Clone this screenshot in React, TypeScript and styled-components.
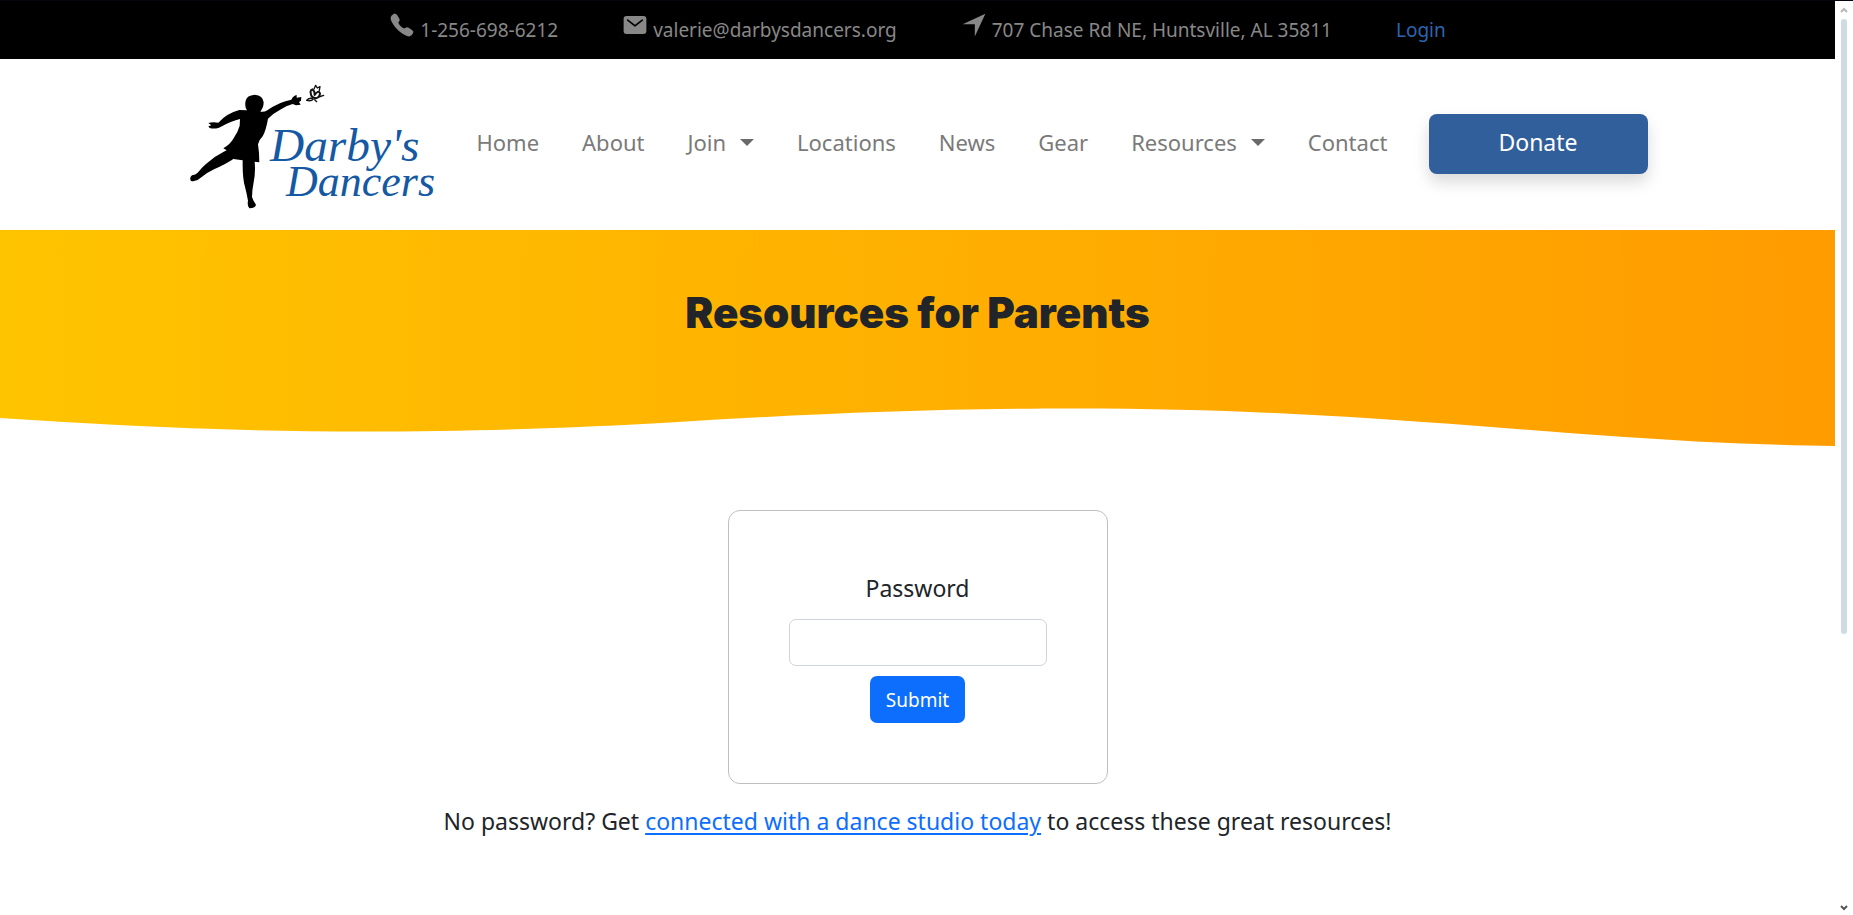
import React from 'react';
import styled, { createGlobalStyle } from 'styled-components';
import { IoCall, IoMail, IoNavigateSharp } from 'react-icons/io5';

const GlobalStyle = createGlobalStyle`
  *, *::before, *::after { box-sizing: border-box; }
  body {
    margin: 0;
    background: #fff;
    color: #212529;
    font-family: "Noto Sans", "Open Sans", sans-serif;
    font-size: 23px;
    line-height: 34px;
  }
`;

const Shell = styled.div`
  display: flex;
  min-height: 100vh;
  border-top: 1px solid #03060f;
`;

const Page = styled.div`
  flex: 1;
  min-width: 0;
`;

const TopBar = styled.address`
  display: flex;
  flex-wrap: wrap;
  justify-content: center;
  column-gap: 64px;
  min-height: 58px;
  padding-bottom: 4px;
  background: #000;
  color: #888;
  font-size: 19px;
  font-style: normal;
`;

const ContactItem = styled.span`
  display: inline-flex;
  align-items: center;
  gap: 5px;
  padding-top: 4px;

  svg {
    width: 26px;
    height: 26px;
    margin-bottom: 10px;
  }
`;

const LoginLink = styled.a`
  display: inline-flex;
  align-items: center;
  padding-top: 4px;
  color: #2b66b1;
  text-decoration: none;
`;

const Header = styled.header`
  display: flex;
  align-items: center;
  max-width: 1460px;
  margin: 0 auto;
  padding: 22px 0 19px;
`;

const LogoLink = styled.a`
  display: block;
  flex: none;

  svg {
    display: block;
    width: 248px;
    height: 130px;
  }
`;

const NavLinks = styled.nav`
  display: flex;
  flex: 1;
  justify-content: space-between;
  padding: 0 41px 8px;
`;

const navText = `
  color: #7a7a7a;
  font-family: inherit;
  font-size: 22px;
  font-weight: 400;
  line-height: 34px;
`;

const NavLink = styled.a`
  ${navText}
  text-decoration: none;
`;

const NavMenuButton = styled.button`
  ${navText}
  display: inline-flex;
  align-items: center;
  gap: 14px;
  padding: 0;
  border: 0;
  background: none;

  &::after {
    content: "";
    border: 7px solid transparent;
    border-top-color: #6a6a6a;
    border-bottom: 0;
  }
`;

const DonateButton = styled.button`
  flex: none;
  width: 219px;
  height: 60px;
  margin-bottom: 4px;
  padding: 0 0 4px;
  border: 0;
  border-radius: 8px;
  background: #315f9b;
  box-shadow: 0 8px 16px rgba(0, 0, 0, 0.15);
  color: #fff;
  font-family: inherit;
  font-size: 23px;
`;

const Hero = styled.section`
  background: linear-gradient(to right, #ffc400, #ff9c00);
`;

const HeroTitle = styled.h1`
  margin: 0;
  padding: 59px 0 69px;
  font-family: Inter, "Liberation Sans", sans-serif;
  font-size: 42px;
  font-weight: 900;
  line-height: 48px;
  text-align: center;
`;

const Wave = styled.svg`
  display: block;
  width: 100%;
  height: 40px;
`;

const Content = styled.main`
  display: flex;
  flex-direction: column;
  align-items: center;
  gap: 20px;
  padding: 64px 16px;
`;

const LoginCard = styled.form`
  display: flex;
  flex-direction: column;
  align-items: center;
  width: 380px;
  padding: 60px;
  border: 1px solid #bfbfbf;
  border-radius: 12px;
`;

const FieldLabel = styled.label`
  margin-bottom: 14px;
`;

const PasswordInput = styled.input`
  width: 100%;
  height: 47px;
  margin-bottom: 10px;
  padding: 6px 12px;
  border: 1px solid #ced4da;
  border-radius: 7px;
  background: #fff;
  font: inherit;
`;

const SubmitButton = styled.button`
  width: 95px;
  height: 47px;
  padding: 0;
  border: 0;
  border-radius: 7px;
  background: #0d6efd;
  color: #fff;
  font-family: inherit;
  font-size: 19px;
`;

const HelpText = styled.p`
  margin: 0;
  text-align: center;

  a {
    color: #0d6efd;
    text-decoration-thickness: 2px;
    text-underline-offset: 3px;
  }
`;

const ScrollRail = styled.div`
  display: flex;
  flex-direction: column;
  align-items: center;
  width: 18px;
  padding: 6px 0 4px;
  background: #fff;

  svg {
    width: 8px;
    height: 6px;
  }
`;

const ScrollThumb = styled.div`
  width: 6px;
  height: 68%;
  margin: 6px 0 auto;
  border-radius: 3px;
  background: #cfdbe4;
`;

const LogoWord = styled.text`
  fill: #1559a3;
  font-family: "Liberation Serif", serif;
  font-style: italic;
`;

function Logo() {
  return (
    <svg viewBox="24 18 744 390" role="img" aria-label="Darby's Dancers">
      <path
        d="M85 144 Q97 140 115 143 Q140 115 178 105 Q190 105 201 106 Q193 96 197 77 Q200 61 224 59 Q249 61 251 82 Q251 98 241 110 Q252 112 262 106 Q298 80 334 74 Q340 62 350 60 L350 68 L364 66 L363 77 L357 81 L362 89 L348 91 L338 87 Q318 92 303 103 Q280 115 264 131 Q258 166 248 184 Q236 196 234 208 Q238 233 238 262 L224 260 Q227 293 221 322 Q216 347 216 366 Q220 379 227 387 Q231 398 208 400 Q201 392 204 377 Q200 355 195 335 Q187 310 188 256 L160 252 Q140 266 102 283 Q79 294 62 308 Q48 322 33 318 Q27 308 36 301 Q47 300 53 293 Q66 277 78 267 Q103 244 130 231 L140 226 L130 220 Q151 207 160 191 Q174 171 179 152 L180 132 Q156 137 117 158 Q101 163 89 159 L85 154 L94 151 Z"
        fill="#000"
      />
      <g fill="none" stroke="#111" strokeWidth="6" strokeLinecap="round" strokeLinejoin="round">
        <path d="M394 62 Q388 46 397 43 Q405 48 404 60 Q415 44 420 55 Q420 66 408 70 Q396 68 394 62 Z" />
        <path d="M402 42 L407 31 L412 39 L420 35 L418 46" strokeWidth="4" />
        <path d="M380 76 Q390 66 400 72 Q394 80 380 76 M404 74 L410 80 M416 66 L431 61" strokeWidth="4" />
      </g>
      <LogoWord x="270" y="258" fontSize="142">Darby's</LogoWord>
      <LogoWord x="318" y="362" fontSize="132">Dancers</LogoWord>
    </svg>
  );
}

function Chevron({ d, color }: { d: string; color: string }) {
  return (
    <svg viewBox="0 0 8 6" aria-hidden="true">
      <path d={d} fill="none" stroke={color} strokeWidth="2" />
    </svg>
  );
}

export default function App() {
  return (
    <>
      <GlobalStyle />
      <Shell>
        <Page>
          <TopBar>
            <ContactItem>
              <IoCall aria-hidden="true" />
              1-256-698-6212
            </ContactItem>
            <ContactItem>
              <IoMail aria-hidden="true" />
              valerie@darbysdancers.org
            </ContactItem>
            <ContactItem>
              <IoNavigateSharp aria-hidden="true" />
              707 Chase Rd NE, Huntsville, AL 35811
            </ContactItem>
            <LoginLink href="#login">Login</LoginLink>
          </TopBar>
          <Header>
            <LogoLink href="#home">
              <Logo />
            </LogoLink>
            <NavLinks>
              <NavLink href="#home">Home</NavLink>
              <NavLink href="#about">About</NavLink>
              <NavMenuButton type="button" aria-haspopup="menu">Join</NavMenuButton>
              <NavLink href="#locations">Locations</NavLink>
              <NavLink href="#news">News</NavLink>
              <NavLink href="#gear">Gear</NavLink>
              <NavMenuButton type="button" aria-haspopup="menu">Resources</NavMenuButton>
              <NavLink href="#contact">Contact</NavLink>
            </NavLinks>
            <DonateButton type="button">Donate</DonateButton>
          </Header>
          <Hero>
            <HeroTitle>Resources for Parents</HeroTitle>
            <Wave viewBox="0 0 1835 40" preserveAspectRatio="none" aria-hidden="true">
              <path
                d="M0 12 C120 20 240 25.5 362 25.5 C490 25.5 590 21 670 16.5 C800 8.5 920 2.5 1073 2.5 C1210 2.5 1310 8 1423 16 C1530 23.5 1630 32.5 1719 36.5 C1760 38.5 1800 39.5 1835 40 L1835 41 L0 41 Z"
                fill="#fff"
              />
            </Wave>
          </Hero>
          <Content>
            <LoginCard onSubmit={(event) => event.preventDefault()}>
              <FieldLabel htmlFor="password">Password</FieldLabel>
              <PasswordInput id="password" type="password" />
              <SubmitButton type="submit">Submit</SubmitButton>
            </LoginCard>
            <HelpText>
              No password? Get <a href="#studios">connected with a dance studio today</a> to access
              these great resources!
            </HelpText>
          </Content>
        </Page>
        <ScrollRail>
          <Chevron d="M1 5 L4 2 L7 5" color="#b8b8b8" />
          <ScrollThumb />
          <Chevron d="M1 1 L4 4 L7 1" color="#555" />
        </ScrollRail>
      </Shell>
    </>
  );
}
